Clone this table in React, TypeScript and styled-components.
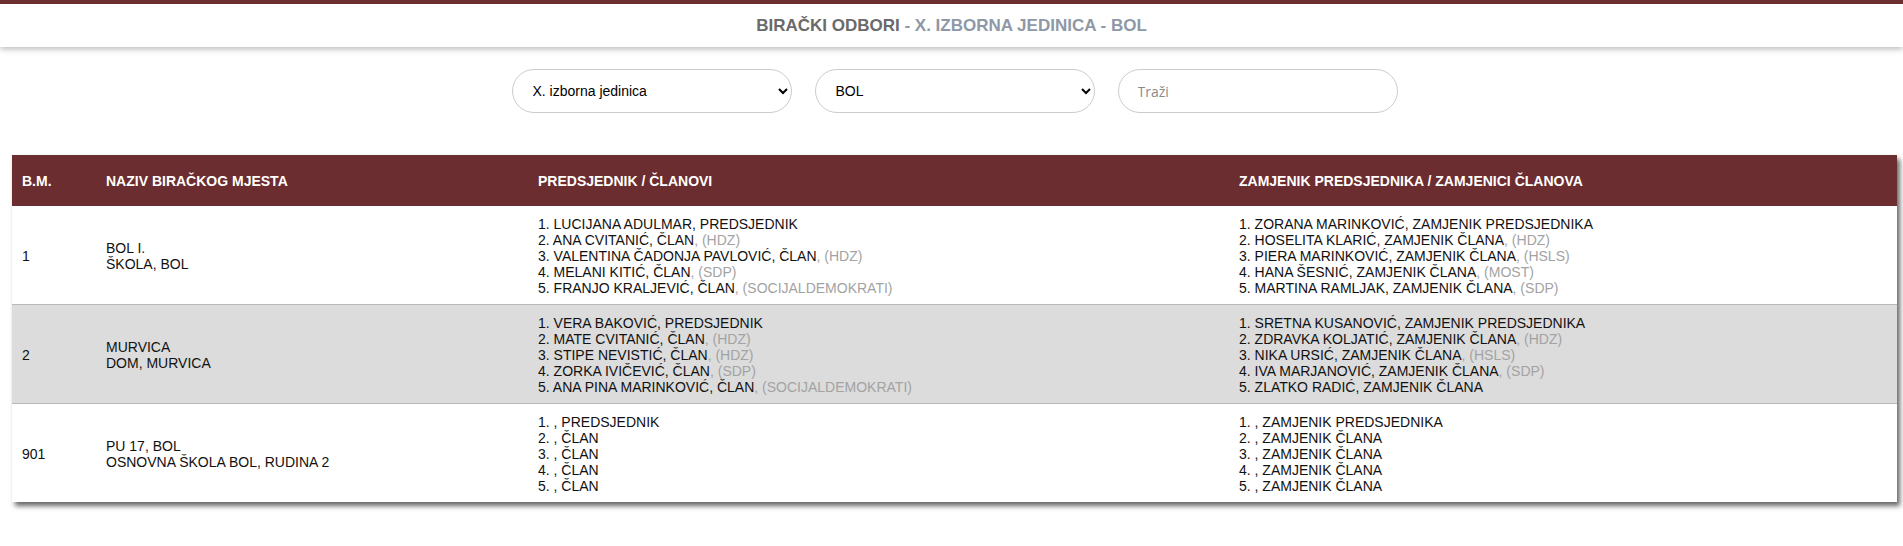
import React from 'react';
import styled, { createGlobalStyle } from 'styled-components';

const GlobalStyle = createGlobalStyle`
  html, body {
    margin: 0;
    padding: 0;
    background: #ffffff;
    font-family: "Liberation Sans", Arial, sans-serif;
  }
`;

const MAROON = '#6b2d2f';

const TopHeader = styled.header`
  display: flex;
  align-items: center;
  justify-content: center;
  height: 43px;
  border-top: 4px solid ${MAROON};
  background: #ffffff;
  box-shadow: 0 2px 6px rgba(0, 0, 0, 0.28);
`;

const Title = styled.h1`
  margin: 0;
  font-size: 17px;
  font-weight: bold;
  color: #6a6a6a;
  font-family: "Liberation Sans", Arial, sans-serif;

  span {
    color: #8e98a6;
  }
`;

const Filters = styled.div`
  display: flex;
  justify-content: center;
  gap: 23px;
  margin: 22px 0 42px;
  padding-left: 6px;
`;

const Select = styled.select`
  width: 280px;
  height: 44px;
  box-sizing: border-box;
  border: 1px solid #cccccc;
  border-radius: 22px;
  background: #ffffff;
  padding: 0 10px 0 16px;
  font-family: "Liberation Sans", Arial, sans-serif;
  font-size: 14px;
  color: #000000;
  outline: none;
`;

const Search = styled.input`
  width: 280px;
  height: 44px;
  box-sizing: border-box;
  border: 1px solid #cccccc;
  border-radius: 22px;
  background: #ffffff;
  padding: 0 19px;
  font-family: "Open Sans", "Liberation Sans", sans-serif;
  font-size: 14px;
  outline: none;

  &::placeholder {
    color: #8a8a8a;
  }
`;

const TableWrap = styled.div`
  margin: 0 6px 20px 12px;
  box-shadow: 3px 4px 5px rgba(0, 0, 0, 0.6);
`;

const Table = styled.table`
  width: 100%;
  border-collapse: collapse;
  table-layout: fixed;
  font-family: "Liberation Sans", Arial, sans-serif;
  font-size: 14px;
  line-height: 16px;
  color: #111111;
`;

const Th = styled.th<{ $w: number }>`
  box-sizing: border-box;
  width: ${(p) => p.$w}px;
  background: ${MAROON};
  color: #ffffff;
  text-align: left;
  font-weight: bold;
  padding: 18px 10px 17px;
`;

const Row = styled.tr<{ $alt?: boolean; $last?: boolean }>`
  background: ${(p) => (p.$alt ? '#dcdcdc' : '#ffffff')};

  td {
    border-bottom: ${(p) => (p.$last ? 'none' : '1px solid #b8b8b8')};
  }
`;

const Td = styled.td`
  padding: 10px 10px 8px;
  vertical-align: middle;
`;

const Line = styled.div``;

const Party = styled.span`
  color: #a3a3a3;
`;

type Member = [string, string?];

interface Place {
  id: string;
  name: string[];
  members: Member[];
  deputies: Member[];
}

const places: Place[] = [
  {
    id: '1',
    name: ['BOL I.', 'ŠKOLA, BOL'],
    members: [
      ['LUCIJANA ADULMAR, PREDSJEDNIK'],
      ['ANA CVITANIĆ, ČLAN', 'HDZ'],
      ['VALENTINA ČADONJA PAVLOVIĆ, ČLAN', 'HDZ'],
      ['MELANI KITIĆ, ČLAN', 'SDP'],
      ['FRANJO KRALJEVIĆ, ČLAN', 'SOCIJALDEMOKRATI'],
    ],
    deputies: [
      ['ZORANA MARINKOVIĆ, ZAMJENIK PREDSJEDNIKA'],
      ['HOSELITA KLARIĆ, ZAMJENIK ČLANA', 'HDZ'],
      ['PIERA MARINKOVIĆ, ZAMJENIK ČLANA', 'HSLS'],
      ['HANA ŠESNIĆ, ZAMJENIK ČLANA', 'MOST'],
      ['MARTINA RAMLJAK, ZAMJENIK ČLANA', 'SDP'],
    ],
  },
  {
    id: '2',
    name: ['MURVICA', 'DOM, MURVICA'],
    members: [
      ['VERA BAKOVIĆ, PREDSJEDNIK'],
      ['MATE CVITANIĆ, ČLAN', 'HDZ'],
      ['STIPE NEVISTIĆ, ČLAN', 'HDZ'],
      ['ZORKA IVIČEVIĆ, ČLAN', 'SDP'],
      ['ANA PINA MARINKOVIĆ, ČLAN', 'SOCIJALDEMOKRATI'],
    ],
    deputies: [
      ['SRETNA KUSANOVIĆ, ZAMJENIK PREDSJEDNIKA'],
      ['ZDRAVKA KOLJATIĆ, ZAMJENIK ČLANA', 'HDZ'],
      ['NIKA URSIĆ, ZAMJENIK ČLANA', 'HSLS'],
      ['IVA MARJANOVIĆ, ZAMJENIK ČLANA', 'SDP'],
      ['ZLATKO RADIĆ, ZAMJENIK ČLANA'],
    ],
  },
  {
    id: '901',
    name: ['PU 17, BOL', 'OSNOVNA ŠKOLA BOL, RUDINA 2'],
    members: [
      [', PREDSJEDNIK'],
      [', ČLAN'],
      [', ČLAN'],
      [', ČLAN'],
      [', ČLAN'],
    ],
    deputies: [
      [', ZAMJENIK PREDSJEDNIKA'],
      [', ZAMJENIK ČLANA'],
      [', ZAMJENIK ČLANA'],
      [', ZAMJENIK ČLANA'],
      [', ZAMJENIK ČLANA'],
    ],
  },
];

const MemberList: React.FC<{ items: Member[] }> = ({ items }) => (
  <>
    {items.map(([text, party], i) => (
      <Line key={i}>
        {i + 1}. {text}
        {party && <Party>, ({party})</Party>}
      </Line>
    ))}
  </>
);

const App: React.FC = () => {
  return (
    <>
      <GlobalStyle />
      <TopHeader>
        <Title>
          BIRAČKI ODBORI <span>- X. IZBORNA JEDINICA - BOL</span>
        </Title>
      </TopHeader>
      <Filters>
        <Select defaultValue="x">
          <option value="x">X. izborna jedinica</option>
        </Select>
        <Select defaultValue="bol">
          <option value="bol">BOL</option>
        </Select>
        <Search type="text" placeholder="Traži" />
      </Filters>
      <TableWrap>
        <Table>
          <thead>
            <tr>
              <Th $w={84}>B.M.</Th>
              <Th $w={432}>NAZIV BIRAČKOG MJESTA</Th>
              <Th $w={701}>PREDSJEDNIK / ČLANOVI</Th>
              <Th $w={668}>ZAMJENIK PREDSJEDNIKA / ZAMJENICI ČLANOVA</Th>
            </tr>
          </thead>
          <tbody>
            {places.map((p, i) => (
              <Row key={p.id} $alt={i % 2 === 1} $last={i === places.length - 1}>
                <Td>{p.id}</Td>
                <Td>
                  {p.name.map((n) => (
                    <Line key={n}>{n}</Line>
                  ))}
                </Td>
                <Td>
                  <MemberList items={p.members} />
                </Td>
                <Td>
                  <MemberList items={p.deputies} />
                </Td>
              </Row>
            ))}
          </tbody>
        </Table>
      </TableWrap>
    </>
  );
};

export default App;
